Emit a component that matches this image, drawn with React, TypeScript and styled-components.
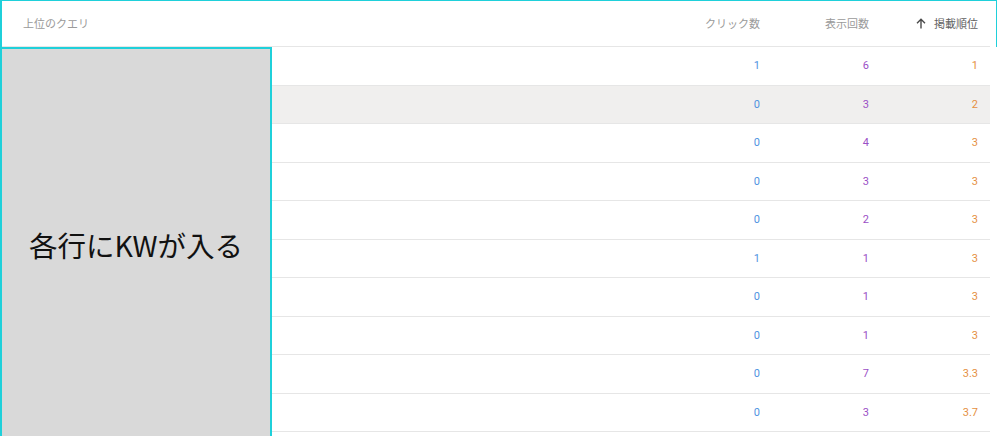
import React from "react";
import styled, { createGlobalStyle } from "styled-components";

const Global = createGlobalStyle`
  html, body { margin: 0; padding: 0; background: #fff; }
  body { font-family: Roboto, "Noto Sans CJK JP", sans-serif; overflow: hidden; }
`;

const Page = styled.div`
  position: relative;
  width: 997px;
  height: 436px;
  overflow: hidden;
  background: #fff;
`;

const Table = styled.div`
  width: 990px;
  display: flex;
  flex-direction: column;
`;

const HeaderRow = styled.div`
  display: grid;
  grid-template-columns: 1fr 109px 109px 109px;
  height: 46px;
  align-items: center;
  border-bottom: 1px solid #e6e6e6;
  font-family: "Noto Sans CJK JP", sans-serif;
  font-size: 11px;
  color: #9a9a9a;
`;

const HeadCell = styled.div<{ $right?: boolean; $active?: boolean }>`
  display: flex;
  align-items: center;
  justify-content: ${(p) => (p.$right ? "flex-end" : "flex-start")};
  gap: 8px;
  padding: ${(p) => (p.$right ? "0 12px 0 0" : "0 0 0 23px")};
  color: ${(p) => (p.$active ? "#5f5f5f" : "#9a9a9a")};
`;

const Row = styled.div<{ $hl?: boolean }>`
  display: grid;
  grid-template-columns: 1fr 109px 109px 109px;
  height: 37.5px;
  align-items: center;
  border-bottom: 1px solid #e6e6e6;
  background: ${(p) => (p.$hl ? "#f0efee" : "#fff")};
  font-size: 11px;
  font-weight: 400;
`;

const Num = styled.div<{ $color: string; $pad: number }>`
  text-align: right;
  padding-right: ${(p) => p.$pad}px;
  color: ${(p) => p.$color};
`;

const HeaderOutline = styled.div`
  position: absolute;
  left: 0;
  top: 0;
  width: 997px;
  height: 47px;
  box-sizing: border-box;
  border-top: 1.5px solid #1fd0da;
  border-left: 2px solid #1fd0da;
  border-right: 1px solid #1fd0da;
  pointer-events: none;
`;

const Mask = styled.div`
  position: absolute;
  left: 0;
  top: 47px;
  width: 272px;
  height: 420px;
  box-sizing: border-box;
  background: #d9d9d9;
  border: 2px solid #1fd0da;
  display: flex;
  align-items: flex-start;
  justify-content: center;
  padding-top: 175px;
  font-family: "Noto Sans CJK JP", sans-serif;
  font-size: 28.5px;
  font-weight: 400;
  color: #111;
`;

const Arrow = () => (
  <svg width="10" height="11" viewBox="0 0 10 11" fill="none">
    <path d="M5 10.5V1.5M1 5.2L5 1.2L9 5.2" stroke="#4a4a4a" strokeWidth="1.4" />
  </svg>
);

const rows: [number, number, string][] = [
  [1, 6, "1"],
  [0, 3, "2"],
  [0, 4, "3"],
  [0, 3, "3"],
  [0, 2, "3"],
  [1, 1, "3"],
  [0, 1, "3"],
  [0, 1, "3"],
  [0, 7, "3.3"],
  [0, 3, "3.7"],
];

export default function App() {
  return (
    <Page>
      <Global />
      <Table>
        <HeaderRow>
          <HeadCell>上位のクエリ</HeadCell>
          <HeadCell $right>クリック数</HeadCell>
          <HeadCell $right>表示回数</HeadCell>
          <HeadCell $right $active>
            <Arrow />
            掲載順位
          </HeadCell>
        </HeaderRow>
        {rows.map((r, i) => (
          <Row key={i} $hl={i === 1}>
            <div />
            <Num $color="#4f93df" $pad={12}>{r[0]}</Num>
            <Num $color="#9b50c6" $pad={12}>{r[1]}</Num>
            <Num $color="#e5903f" $pad={12}>{r[2]}</Num>
          </Row>
        ))}
      </Table>
      <HeaderOutline />
      <Mask>各行にKWが入る</Mask>
    </Page>
  );
}
